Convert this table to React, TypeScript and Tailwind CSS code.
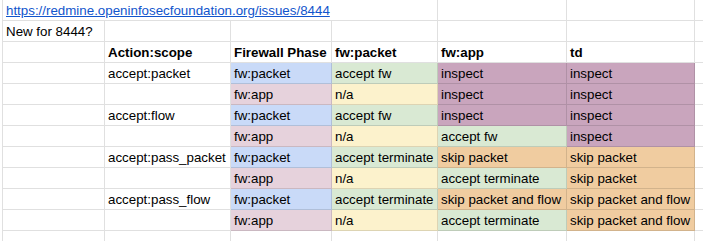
import { FC } from "react";

type Fill = "blue" | "pink" | "green" | "yellow" | "mag" | "orange" | "";

const fills: Record<string, string> = {
  blue: "bg-[#c9daf8]",
  pink: "bg-[#e6d2dc]",
  green: "bg-[#d9e9d3]",
  yellow: "bg-[#fcf2cc]",
  mag: "bg-[#c9a5bd]",
  orange: "bg-[#f0cca0]",
  "": "bg-white",
};

// column widths, border-r included
const cols = [
  "w-[103px] border-l",
  "w-[126px]",
  "w-[101px]",
  "w-[106px]",
  "w-[129px]",
  "w-[128px]",
  "w-[100px]",
];

type Cell = [string, Fill?];

const rows: Cell[][] = [
  [[""], ["accept:packet"], ["fw:packet", "blue"], ["accept fw", "green"], ["inspect", "mag"], ["inspect", "mag"], [""]],
  [[""], [""], ["fw:app", "pink"], ["n/a", "yellow"], ["inspect", "mag"], ["inspect", "mag"], [""]],
  [[""], ["accept:flow"], ["fw:packet", "blue"], ["accept fw", "green"], ["inspect", "mag"], ["inspect", "mag"], [""]],
  [[""], [""], ["fw:app", "pink"], ["n/a", "yellow"], ["accept fw", "green"], ["inspect", "mag"], [""]],
  [[""], ["accept:pass_packet"], ["fw:packet", "blue"], ["accept terminate", "green"], ["skip packet", "orange"], ["skip packet", "orange"], [""]],
  [[""], [""], ["fw:app", "pink"], ["n/a", "yellow"], ["accept terminate", "green"], ["skip packet", "orange"], [""]],
  [[""], ["accept:pass_flow"], ["fw:packet", "blue"], ["accept terminate", "green"], ["skip packet and flow", "orange"], ["skip packet and flow", "orange"], [""]],
  [[""], [""], ["fw:app", "pink"], ["n/a", "yellow"], ["accept terminate", "green"], ["skip packet and flow", "orange"], [""]],
  [[""], [""], [""], [""], [""], [""], [""]],
];

const base =
  "h-[21px] shrink-0 border-r border-b border-[rgba(0,0,0,0.12)] px-[3px] leading-[21px] whitespace-nowrap overflow-hidden";

const Row: FC<{ cells: Cell[]; bold?: boolean }> = ({ cells, bold }) => (
  <div className="flex">
    {cells.map(([text, fill], i) => (
      <div key={i} className={`${base} ${cols[i]} ${fills[fill ?? ""]} ${bold ? "font-bold" : ""}`}>
        {text}
      </div>
    ))}
  </div>
);

export default function App() {
  return (
    <div className="w-[703px] h-[241px] overflow-hidden bg-white pl-[2px] text-[13.33px] text-black font-['Liberation_Sans',Arial,sans-serif]">
      <div className="flex">
        <div className={`${base} w-[436px] border-l`}>
          <span className="text-[#1155cc] underline">https://redmine.openinfosecfoundation.org/issues/8444</span>
        </div>
        <div className={`${base} ${cols[4]}`} />
        <div className={`${base} ${cols[5]}`} />
        <div className={`${base} ${cols[6]}`} />
      </div>
      <Row cells={[["New for 8444?"], [""], [""], [""], [""], [""], [""]]} />
      <Row bold cells={[[""], ["Action:scope"], ["Firewall Phase"], ["fw:packet"], ["fw:app"], ["td"], [""]]} />
      {rows.map((r, i) => (
        <Row key={i} cells={r} />
      ))}
    </div>
  );
}
